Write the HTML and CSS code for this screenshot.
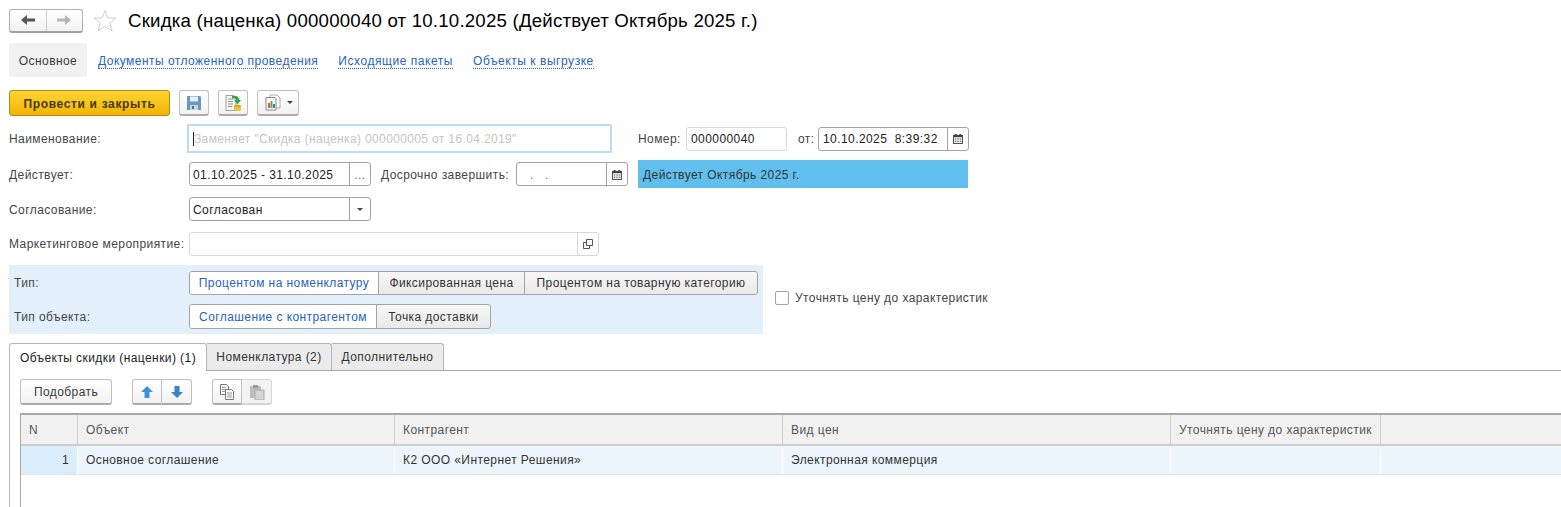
FILE: index.html
```html
<!DOCTYPE html>
<html lang="ru">
<head>
<meta charset="utf-8">
<title>Скидка (наценка) 000000040</title>
<link rel="stylesheet" href="styles.css">
</head>
<body>
<div class="page">
  <header class="title-row">
    <div class="nav-group">
      <button class="nav-btn"><svg width="16" height="12" viewBox="0 0 16 12"><path d="M1 6 7 1v3.500h8v3H7V11z" fill="#555"/></svg></button>
      <button class="nav-btn nav-btn-off"><svg width="16" height="12" viewBox="0 0 16 12"><path d="M15 6 9 1v3.500H1v3h8V11z" fill="#b5b5b5"/></svg></button>
    </div>
    <svg class="star" width="24" height="24" viewBox="0 0 24 24"><path d="M12 1.500 15 9h8l-6.300 5 2.400 8L12 17.300 4.900 22l2.400-8L1 9h8z" fill="#fff" stroke="#cfcfcf"/></svg>
    <h1 class="title">Скидка (наценка) 000000040 от 10.10.2025 (Действует Октябрь 2025 г.)</h1>
  </header>

  <nav class="section-nav">
    <span class="section-current">Основное</span>
    <a class="section-link">Документы отложенного проведения</a>
    <a class="section-link">Исходящие пакеты</a>
    <a class="section-link">Объекты к выгрузке</a>
  </nav>

  <div class="command-bar">
    <button class="btn-primary">Провести и закрыть</button>
    <button class="icon-btn"><svg width="16" height="16" viewBox="0 0 16 16"><path d="M1 1h13l1 1v13H1z" fill="#6b97c4"/><path d="M4 1.500h8v5H4z" fill="#e6eff7"/><path d="M4 10h8v5H4z" fill="#c9d3dc"/><path d="M6 11h2v3H6z" fill="#4f6f90"/></svg></button>
    <button class="icon-btn"><svg width="18" height="18" viewBox="0 0 18 18"><path d="M2 1.500h8l2 2v13H2z" fill="#f4f6f4" stroke="#9aa59a"/><path d="M4 5h5M4 7.500h5M4 10h5M4 12.500h4" stroke="#8a948a"/><path d="M8 2h3c3 0 4 2 4 4h2l-3.500 4.500L10 6h2c0-1-1-1.500-2-1.500H8z" fill="#2fa84a"/><path d="M10 12h7v4c0 1.300-7 1.300-7 0z" fill="#efc63a"/><ellipse cx="13.500" cy="12" rx="3.500" ry="1.300" fill="#d9a81f"/></svg></button>
    <button class="icon-btn icon-btn-menu"><svg width="18" height="18" viewBox="0 0 18 18"><path d="M6 1h7l3 3v10H6z" fill="#fff" stroke="#aaa"/><path d="M2 3.500h9l1 1V16H2z" fill="#fff" stroke="#888"/><path d="M4 9h2v5H4z" fill="#d9534f"/><path d="M6.500 7h2v7h-2z" fill="#4caf50"/><path d="M9 10h2v4H9z" fill="#3f7fc4"/></svg><i class="caret"></i></button>
  </div>

  <section class="form">
    <div class="row row-name">
      <label class="label">Наименование:</label>
      <div class="field field-focus"><span class="cursor"></span><span class="placeholder">Заменяет "Скидка (наценка) 000000005 от 16.04.2019"</span></div>
      <label class="label label-number">Номер:</label>
      <div class="field field-light field-number">000000040</div>
      <label class="label label-from">от:</label>
      <div class="field field-date"><span class="value">10.10.2025&nbsp;&nbsp;8:39:32</span><span class="addon"><svg class="cal" width="10" height="11" viewBox="0 0 11 12"><path d="M0 2h11v10H0z" fill="#444"/><path d="M1 4.500h9V11H1z" fill="#eee"/><path d="M2 1h2v2H2zM7 1h2v2H7z" fill="#444"/><path d="M2 6h1.500v1H2zM4.750 6h1.500v1h-1.500zM7.500 6H9v1H7.500zM2 8.500h1.500v1H2zM4.750 8.500h1.500v1h-1.500zM7.500 8.500H9v1H7.500z" fill="#555"/></svg></span></div>
    </div>

    <div class="row row-low">
      <label class="label">Действует:</label>
      <div class="field field-period"><span class="value">01.10.2025 - 31.10.2025</span><span class="addon addon-dots">...</span></div>
      <label class="label label-early">Досрочно завершить:</label>
      <div class="field field-early"><span class="value value-mask">.&nbsp;&nbsp;&nbsp;.</span><span class="addon"><svg class="cal" width="10" height="11" viewBox="0 0 11 12"><path d="M0 2h11v10H0z" fill="#444"/><path d="M1 4.500h9V11H1z" fill="#eee"/><path d="M2 1h2v2H2zM7 1h2v2H7z" fill="#444"/><path d="M2 6h1.500v1H2zM4.750 6h1.500v1h-1.500zM7.500 6H9v1H7.500zM2 8.500h1.500v1H2zM4.750 8.500h1.500v1h-1.500zM7.500 8.500H9v1H7.500z" fill="#555"/></svg></span></div>
      <div class="status">Действует Октябрь 2025 г.</div>
    </div>

    <div class="row row-low">
      <label class="label">Согласование:</label>
      <div class="field field-period"><span class="value">Согласован</span><span class="addon"><i class="caret caret-small"></i></span></div>
    </div>

    <div class="row row-event">
      <label class="label">Маркетинговое мероприятие:</label>
      <div class="field field-light field-event"><span class="value"></span><span class="addon addon-light"><svg width="10" height="10" viewBox="0 0 10 10"><path d="M3.500.5h6v6h-6z" fill="none" stroke="#555"/><path d="M3.500 3.500h-3v6h6v-3" fill="none" stroke="#555"/></svg></span></div>
    </div>

    <div class="type-block">
      <div class="type-panel">
        <div class="row type-row">
          <label class="label label-type">Тип:</label>
          <div class="toggle">
            <span class="toggle-item toggle-on item-percent">Процентом на номенклатуру</span>
            <span class="toggle-item item-fixed">Фиксированная цена</span>
            <span class="toggle-item item-category">Процентом на товарную категорию</span>
          </div>
        </div>
        <div class="row type-row type-row-second">
          <label class="label label-type">Тип объекта:</label>
          <div class="toggle">
            <span class="toggle-item toggle-on item-agreement">Соглашение с контрагентом</span>
            <span class="toggle-item item-point">Точка доставки</span>
          </div>
        </div>
      </div>
      <label class="check-label"><span class="checkbox"></span>Уточнять цену до характеристик</label>
    </div>
  </section>

  <div class="tabs">
    <span class="tab tab-active tab-objects">Объекты скидки (наценки) (1)</span>
    <span class="tab tab-goods">Номенклатура (2)</span>
    <span class="tab tab-extra">Дополнительно</span>
  </div>

  <section class="tab-body">
    <div class="table-bar">
      <button class="bar-btn btn-pick">Подобрать</button>
      <div class="btn-group">
        <button class="bar-btn seg"><svg width="14" height="14" viewBox="0 0 14 14"><path d="M7 1l6 6H9.500v6h-5V7H1z" fill="#3b93d6"/></svg></button>
        <button class="bar-btn seg"><svg width="14" height="14" viewBox="0 0 14 14"><path d="M7 13l6-6H9.500V1h-5v6H1z" fill="#3b83c6"/></svg></button>
      </div>
      <div class="btn-group">
        <button class="bar-btn seg"><svg width="16" height="16" viewBox="0 0 16 16"><path d="M1.500.5h6l2 2v8h-8z" fill="#fff" stroke="#777"/><path d="M3 3.500h4M3 5.500h4M3 7.500h3" stroke="#999"/><path d="M6.500 5.500h6l2 2v8h-8z" fill="#fff" stroke="#777"/><path d="M8 9h5M8 11h5M8 13h5" stroke="#999"/></svg></button>
        <button class="bar-btn seg seg-off"><svg width="16" height="16" viewBox="0 0 16 16"><path d="M1 2h11v12H1z" fill="#bdbdbd"/><path d="M4 1h5v3H4z" fill="#999"/><path d="M6 6h9v10H6z" fill="#d5d5d5" stroke="#aaa"/></svg></button>
      </div>
    </div>

    <div class="grid">
      <div class="head cell-n">N</div>
      <div class="head">Объект</div>
      <div class="head">Контрагент</div>
      <div class="head">Вид цен</div>
      <div class="head">Уточнять цену до характеристик</div>
      <div class="head"></div>
      <div class="cell cell-num">1</div>
      <div class="cell">Основное соглашение</div>
      <div class="cell">К2 ООО «Интернет Решения»</div>
      <div class="cell">Электронная коммерция</div>
      <div class="cell"></div>
      <div class="cell"></div>
    </div>
  </section>
</div>
</body>
</html>
```

FILE: styles.css
```css
* { box-sizing: border-box; }
html, body { margin: 0; padding: 0; background: #fff; }
body { font: 12px/14px "Liberation Sans", Arial, sans-serif; color: #3a3a3a; letter-spacing: .42px; }
button { font: inherit; letter-spacing: inherit; color: inherit; cursor: default; }

.page { width: 1561px; height: 507px; overflow: hidden; display: flex; flex-direction: column; padding-left: 9px; }
.page > * { flex: none; }

/* title */
.title-row { display: flex; align-items: center; height: 25px; margin-top: 8px; }
.nav-group { display: flex; width: 74px; height: 24px; border: 1px solid #b0b0b0; border-bottom: 2px solid #a0a0a0; border-radius: 3px; background: linear-gradient(#fff, #f1f1f1); }
.nav-btn { flex: 1; border: 0; padding: 0; background: none; display: flex; align-items: center; justify-content: center; }
.nav-btn-off { border-left: 1px solid #ccc; }
.star { margin-left: 10px; }
.title { margin: 0 0 0 11px; padding-top: 1px; font-size: 18.67px; font-weight: 400; line-height: 24px; color: #000; letter-spacing: .2px; white-space: nowrap; }

/* sections */
.section-nav { display: flex; align-items: center; height: 34px; margin-top: 10px; }
.section-current { display: flex; align-items: center; justify-content: center; width: 78px; height: 34px; padding-top: 2px; background: #f1f1f1; border-radius: 3px; }
.section-link { margin-left: 20px; margin-top: 4px; color: #2a63b8; border-bottom: 1px dotted #2a63b8; line-height: 13px; letter-spacing: .55px; white-space: nowrap; }
.section-link:first-of-type { margin-left: 11px; letter-spacing: .47px; }

/* commands */
.command-bar { display: flex; margin-top: 13px; height: 26px; }
.btn-primary { width: 161px; height: 26px; padding: 2px 0 0; border: 1px solid #b08a10; border-radius: 3px; background: linear-gradient(#fcd634, #f3b300); font-weight: 700; letter-spacing: .65px; color: #453a10; }
.icon-btn { display: flex; align-items: center; justify-content: center; width: 30px; height: 26px; margin-left: 9px; padding: 0; border: 1px solid #c0c0c0; border-bottom: 2px solid #aaa; border-radius: 3px; background: linear-gradient(#fff, #f2f2f2); }
.icon-btn-menu { width: 42px; gap: 5px; }
.caret { display: block; width: 0; height: 0; border: 3.500px solid transparent; border-top: 3.500px solid #444; border-bottom: 0; }
.caret-small { border-width: 3px 3px 0; }

/* form */
.form { display: flex; flex-direction: column; margin-top: 8px; }
.row { display: flex; align-items: center; height: 24px; margin-bottom: 11px; }
.row-name { height: 29px; margin-bottom: 9px; }
.row-event { margin-bottom: 9px; }
.row-low .label, .row-low .value, .row-low .status { padding-top: 2px; }
.label { flex: none; width: 180px; white-space: nowrap; color: #444; }
.field { display: flex; align-items: center; height: 24px; border: 1px solid #a3a3a3; border-radius: 3px; background: #fff; padding-left: 3px; color: #222; white-space: nowrap; }
.field-light { border-color: #d8d8d8; }
.field-focus { width: 425px; height: 29px; margin-left: -2px; border: 2px solid #bcdcf5; border-radius: 0; padding-left: 4px; }
.cursor { width: 1px; height: 14px; background: #222; }
.placeholder { color: #c4c4c4; letter-spacing: .36px; }
.label-number { width: 48px; margin-left: 26px; }
.field-number { width: 101px; padding-left: 4px; }
.label-from { width: 20px; margin-left: 11px; }
.field-date { width: 151px; padding-left: 4px; }
.value { flex: 1; min-width: 0; }
.value-mask { padding-left: 10px; color: #8a7430; }
.addon { flex: none; display: flex; align-items: center; justify-content: center; width: 21px; align-self: stretch; border-left: 1px solid #a3a3a3; }
.addon-light { border-left-color: #d8d8d8; }
.addon-dots { align-items: flex-end; padding-bottom: 5px; line-height: 10px; color: #666; }
.field-period { width: 182px; }
.label-early { width: 135px; margin-left: 10px; }
.field-early { width: 112px; }
.status { width: 330px; height: 28px; margin-left: 10px; padding-left: 5px; display: flex; align-items: center; background: #60bfec; color: #333; }
.field-event { width: 410px; }

/* type block */
.type-block { display: flex; align-items: flex-end; }
.type-panel { width: 754px; height: 69px; padding-top: 6px; background: #e3f0fb; }
.type-row { height: 24px; margin-bottom: 9px; }
.type-row-second { height: 25px; margin: 0; }
.label-type { width: 180px; padding-left: 5px; }
.toggle { display: flex; height: 100%; border: 1px solid #a3a3a3; border-radius: 3px; background: linear-gradient(#f7f7f7, #e9e9e9); overflow: hidden; }
.toggle-item { display: flex; align-items: center; justify-content: center; border-left: 1px solid #a3a3a3; white-space: nowrap; color: #333; }
.toggle-on { border-left: 0; background: #fff; color: #2a63b8; }
.item-percent { width: 188px; }
.item-fixed { width: 146px; }
.item-category { width: 233px; }
.item-agreement { width: 186px; }
.item-point { width: 114px; }
.check-label { display: flex; align-items: center; gap: 6px; margin: 0 0 29px 12px; color: #444; white-space: nowrap; }
.checkbox { width: 14px; height: 14px; border: 1px solid #a3a3a3; border-radius: 2px; background: #fff; }

/* tabs */
.tabs { display: flex; height: 28px; margin-top: 9px; border-bottom: 1px solid #a8a8a8; }
.tab { display: flex; align-items: center; justify-content: center; height: 27px; border: 1px solid #b5b5b5; border-bottom: 0; border-left: 0; border-radius: 0 3px 0 0; background: #ebebeb; color: #333; white-space: nowrap; }
.tab-active { height: 28px; background: #fff; border-left: 1px solid #b5b5b5; border-radius: 3px 3px 0 0; color: #222; }
.tab-objects { width: 198px; }
.tab-goods { width: 125px; }
.tab-extra { width: 112px; }

/* tab body */
.page > .tab-body { flex: 1 1 0; min-height: 0; overflow: hidden; border-left: 1px solid #b5b5b5; padding: 8px 0 0 10px; }
.table-bar { display: flex; height: 26px; }
.bar-btn { display: flex; align-items: center; justify-content: center; height: 26px; padding: 0; border: 1px solid #c0c0c0; border-bottom: 2px solid #aaa; border-radius: 3px; background: linear-gradient(#fff, #f2f2f2); }
.btn-pick { width: 92px; }
.btn-group { display: flex; margin-left: 20px; }
.seg { width: 30px; border-radius: 0; }
.seg:first-child { border-radius: 3px 0 0 3px; }
.seg:last-child { border-left: 0; border-radius: 0 3px 3px 0; }
.seg-off { background: #f3f3f3; border-color: #d5d5d5; }

.grid { display: grid; grid-template-columns: 57px 317px 388px 388px 210px 1fr; width: 1545px; margin-top: 8px; border-top: 2px solid #a8a8a8; border-left: 1px solid #a8a8a8; }
.head { height: 31px; padding: 0 8px; display: flex; align-items: center; background: #f1f1f1; border-right: 1px solid #ccc; border-bottom: 2px solid #ccc; color: #555; white-space: nowrap; }
.cell-n { color: #555; }
.cell { height: 29px; padding: 0 8px; display: flex; align-items: center; background: #edf5fc; border-right: 1px solid #fff; border-bottom: 1px solid #e2e2e2; color: #333; white-space: nowrap; }
.cell-num { justify-content: flex-end; background: #dbecfa; }
.grid::after { content: ""; grid-column: 1 / -1; height: 40px; }
```
